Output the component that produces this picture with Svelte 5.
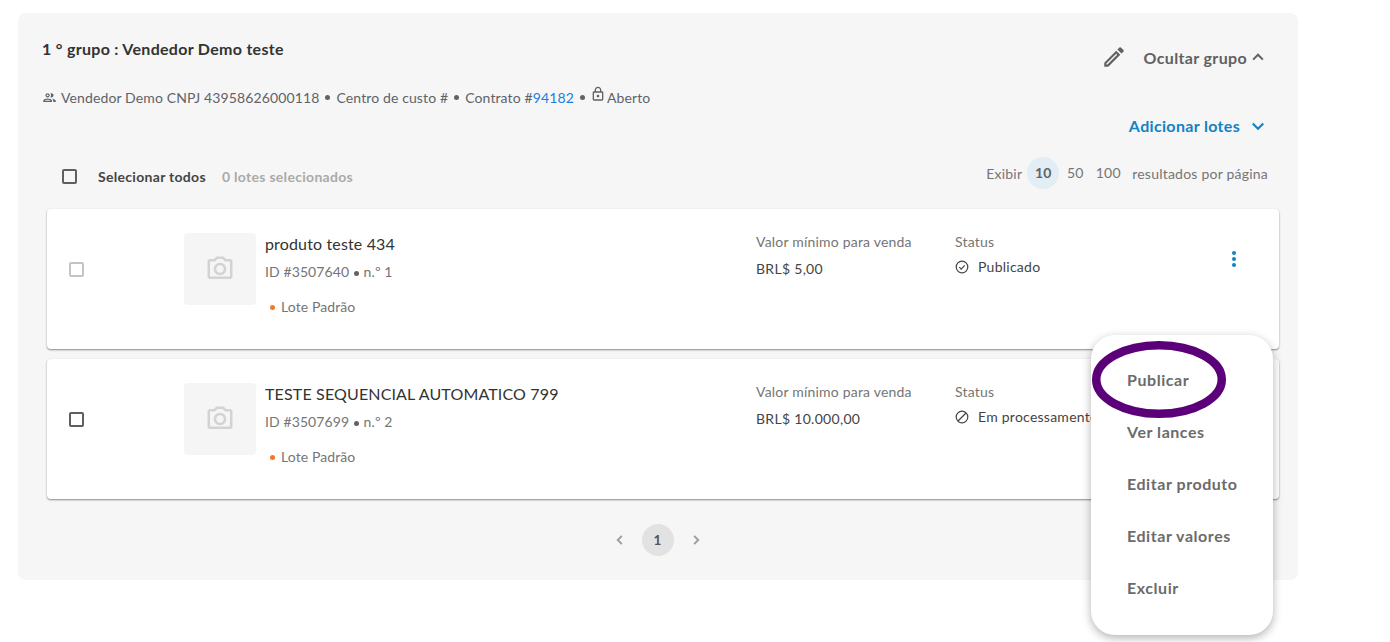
<script>
	const lots = [
		{ name: 'produto teste 434', id: '3507640', n: 1, price: 'BRL$ 5,00', status: 'Publicado', icon: 'check', faded: true },
		{ name: 'TESTE SEQUENCIAL AUTOMATICO 799', id: '3507699', n: 2, price: 'BRL$ 10.000,00', status: 'Em processamento', icon: 'block', faded: false }
	];
	const actions = ['Publicar', 'Ver lances', 'Editar produto', 'Editar valores', 'Excluir'];
</script>

<div class="page">
	<section class="group">
		<div class="head">
			<div class="info">
				<h2>1 ° grupo : Vendedor Demo teste</h2>
				<p class="meta">
					<svg class="people" viewBox="0 0 24 24" width="15" height="15"><path fill="#5f6368" d="M9 13.75c-2.34 0-7 1.17-7 3.5V19h14v-1.75c0-2.33-4.66-3.5-7-3.5zM4.34 17c.84-.58 2.87-1.25 4.66-1.25s3.82.67 4.66 1.25H4.34zM9 12c1.93 0 3.5-1.57 3.5-3.5S10.93 5 9 5 5.500 6.570 5.500 8.500 7.070 12 9 12zm0-5c.83 0 1.500.67 1.500 1.500S9.830 10 9 10s-1.500-.67-1.500-1.500S8.170 7 9 7zm7.040 6.810c1.160.84 1.960 1.960 1.960 3.440V19h4v-1.750c0-2.020-3.500-3.170-5.960-3.440zM15 12c1.930 0 3.500-1.570 3.500-3.500S16.930 5 15 5c-.54 0-1.040.13-1.500.35.630.89 1 1.980 1 3.150s-.37 2.260-1 3.150c.46.220.96.350 1.500.350z"/></svg>
					<span>Vendedor Demo CNPJ 43958626000118</span>
					<i class="dot"></i>
					<span>Centro de custo #</span>
					<i class="dot"></i>
					<span>Contrato #<span class="link">94182</span></span>
					<i class="dot tight"></i>
					<svg class="lock" viewBox="0 0 24 24" width="16" height="16"><path fill="#5f6368" d="M18 8h-1V6c0-2.760-2.240-5-5-5S7 3.240 7 6v2H6c-1.100 0-2 .9-2 2v10c0 1.100.9 2 2 2h12c1.100 0 2-.9 2-2V10c0-1.100-.9-2-2-2zM9 6c0-1.660 1.340-3 3-3s3 1.340 3 3v2H9V6zm9 14H6V10h12v10zm-6-3c1.100 0 2-.9 2-2s-.9-2-2-2-2 .9-2 2 .9 2 2 2z"/></svg>
					<span>Aberto</span>
				</p>
			</div>
			<div class="head-actions">
				<svg class="pencil" viewBox="0 0 24 24" width="26" height="26"><path fill="#616161" d="M3 17.250V21h3.750L17.810 9.940l-3.750-3.750L3 17.250zM5.920 19H5v-.92l9.060-9.060.92.92L5.920 19zM20.710 7.040a1 1 0 0 0 0-1.410l-2.340-2.340a1 1 0 0 0-1.410 0l-1.830 1.830 3.750 3.750 1.830-1.830z"/></svg>
				<button class="toggle">Ocultar grupo
					<svg viewBox="0 0 24 24" width="18" height="18"><path fill="none" stroke="#616161" stroke-width="2.600" d="M5.500 15.500 12 9l6.500 6.500"/></svg>
				</button>
			</div>
		</div>

		<div class="add-row">
			<button class="add">Adicionar lotes
				<svg viewBox="0 0 24 24" width="18" height="18"><path fill="none" stroke="#1282c4" stroke-width="2.800" d="M5 10 12 17 19 10"/></svg>
			</button>
		</div>

		<div class="toolbar">
			<div class="select-all">
				<span class="box dark"></span>
				<strong>Selecionar todos</strong>
				<span class="count">0 lotes selecionados</span>
			</div>
			<div class="per-page">
				<span>Exibir</span>
				<span class="size active">10</span>
				<span class="size">50</span>
				<span class="size wide">100</span>
				<span class="suffix">resultados por página</span>
			</div>
		</div>

		<div class="lots">
			{#each lots as lot}
				<article class="card">
					<span class="box" class:dark={!lot.faded}></span>
					<div class="thumb">
						<svg viewBox="0 0 24 24" width="30" height="30"><path fill="#d3d3d3" d="M14.120 4l1.830 2H20v12H4V6h4.050l1.830-2h4.240M15 2H9L7.170 4H4c-1.100 0-2 .9-2 2v12c0 1.100.9 2 2 2h16c1.100 0 2-.9 2-2V6c0-1.100-.9-2-2-2h-3.170L15 2zm-3 7c1.650 0 3 1.350 3 3s-1.350 3-3 3-3-1.350-3-3 1.350-3 3-3m0-2c-2.760 0-5 2.240-5 5s2.240 5 5 5 5-2.240 5-5-2.240-5-5-5z"/></svg>
					</div>
					<div class="desc">
						<h3>{lot.name}</h3>
						<p class="lot-id">ID #{lot.id} <i class="dot small"></i> n.º {lot.n}</p>
						<p class="tag"><i class="orange"></i>Lote Padrão</p>
					</div>
					<div class="price">
						<span class="label">Valor mínimo para venda</span>
						<span class="value">{lot.price}</span>
					</div>
					<div class="status">
						<span class="label">Status</span>
						<span class="state">
							{#if lot.icon === 'check'}
								<svg viewBox="0 0 16 16" width="16" height="16"><circle cx="8" cy="8" r="5.800" fill="none" stroke="#444" stroke-width="1.200"/><path fill="none" stroke="#444" stroke-width="1.200" d="M5.300 8.200l1.900 1.900 3.500-3.700"/></svg>
							{:else}
								<svg viewBox="0 0 16 16" width="16" height="16"><circle cx="8" cy="8" r="5.800" fill="none" stroke="#444" stroke-width="1.200"/><path fill="none" stroke="#444" stroke-width="1.200" d="M4 12 12 4"/></svg>
							{/if}
							{lot.status}
						</span>
					</div>
					{#if lot.faded}
						<button class="more" aria-label="Mais opções"><i></i><i></i><i></i></button>
					{/if}
				</article>
			{/each}
		</div>

		<nav class="pager">
			<svg viewBox="0 0 24 24" width="18" height="18"><path fill="none" stroke="#9e9e9e" stroke-width="2.600" d="M14.500 6.500 9 12l5.500 5.500"/></svg>
			<span class="current">1</span>
			<svg viewBox="0 0 24 24" width="18" height="18"><path fill="none" stroke="#9e9e9e" stroke-width="2.600" d="M9.500 6.500 15 12l-5.500 5.500"/></svg>
		</nav>
	</section>

	<ul class="menu">
		{#each actions as action}
			<li>{action}</li>
		{/each}
	</ul>
	<svg class="circle" viewBox="0 0 136 80" width="136" height="80"><ellipse cx="68" cy="39.500" rx="62.750" ry="34.250" fill="none" stroke="#5c0079" stroke-width="8.500"/></svg>
</div>

<style>
	:global(body) {
		margin: 0;
		background: #fff;
	}
	.page {
		position: relative;
		height: 642px;
		overflow: hidden;
		padding: 13px 92px 0 18px;
		box-sizing: border-box;
		font-family: Lato, "Open Sans", sans-serif;
		color: #616161;
	}
	.group {
		height: 567px;
		box-sizing: border-box;
		padding: 24px 19px 0 24px;
		background: #f6f6f6;
		border-radius: 8px;
	}
	.head {
		display: flex;
		justify-content: space-between;
	}
	h2 {
		margin: 0;
		font-size: 16px;
		line-height: 24px;
		font-weight: 700;
		letter-spacing: 0.3px;
		color: #333;
	}
	.meta {
		display: flex;
		align-items: center;
		margin: 26px 0 0;
		height: 20px;
		font-size: 14px;
		letter-spacing: 0.12px;
		color: #5f6368;
	}
	.people {
		margin-right: 4px;
	}
	.lock {
		margin: -6px 1px 0 0;
	}
	.link {
		color: #1a7fe0;
	}
	.dot {
		width: 5px;
		height: 5px;
		margin: 1px 6px 0;
		border-radius: 50%;
		background: #5f6368;
	}
	.dot.tight {
		margin-right: 5px;
	}
	.dot.small {
		display: inline-block;
		margin: 0 1px 1px;
	}
	.head-actions {
		display: flex;
		align-items: center;
		height: 28px;
		margin-top: 6px;
		padding-right: 12px;
	}
	button {
		border: 0;
		padding: 0;
		background: none;
		font-family: inherit;
	}
	.toggle {
		display: flex;
		align-items: center;
		gap: 2px;
		margin-left: 17px;
		font-size: 16px;
		font-weight: 700;
		letter-spacing: 0.35px;
		color: #616161;
	}
	.add-row {
		display: flex;
		justify-content: flex-end;
		margin-top: 6px;
		padding-right: 12px;
	}
	.add {
		display: flex;
		align-items: center;
		gap: 9px;
		height: 24px;
		font-size: 16px;
		font-weight: 700;
		letter-spacing: 0.33px;
		color: #1282c4;
	}
	.toolbar {
		display: flex;
		justify-content: space-between;
		align-items: center;
		height: 32px;
		margin-top: 20px;
		padding: 0 11px 0 20px;
	}
	.select-all {
		display: flex;
		align-items: center;
		font-size: 14px;
		letter-spacing: 0.3px;
		margin-top: 7px;
	}
	.select-all strong {
		margin-left: 21px;
		color: #444;
	}
	.count {
		margin-left: 16px;
		font-weight: 700;
		color: #aaa;
	}
	.box {
		flex: none;
		width: 11px;
		height: 11px;
		border: 2px solid #c4c4c4;
		border-radius: 2px;
	}
	.box.dark {
		border-color: #5f5f5f;
	}
	.per-page {
		display: flex;
		align-items: center;
		font-size: 14px;
		letter-spacing: 0.22px;
		color: #757575;
	}
	.size {
		width: 32px;
		height: 32px;
		line-height: 32px;
		text-align: center;
		border-radius: 50%;
	}
	.size.wide {
		width: 34px;
	}
	.size.active {
		margin-left: 5px;
		background: #e2edf4;
		font-weight: 700;
		color: #5f6368;
	}
	.suffix {
		margin-left: 7px;
	}
	.lots {
		display: flex;
		flex-direction: column;
		gap: 10px;
		margin: 20px 0 0 5px;
	}
	.card {
		position: relative;
		display: flex;
		height: 140px;
		box-sizing: border-box;
		padding: 24px 0 0 22px;
		background: #fff;
		border-radius: 4px;
		box-shadow: 0 1px 2px rgba(0, 0, 0, 0.45);
	}
	.card > .box {
		margin: 29px 100px 0 0;
	}
	.thumb {
		display: flex;
		flex: none;
		align-items: center;
		justify-content: center;
		width: 72px;
		height: 72px;
		border-radius: 4px;
		background: #f5f5f5;
	}
	.desc {
		width: 491px;
		margin-left: 9px;
	}
	h3 {
		margin: 0;
		font-size: 16px;
		line-height: 22px;
		font-weight: 400;
		letter-spacing: 0.15px;
		color: #333;
	}
	.lot-id {
		margin: 7px 0 0;
		font-size: 14px;
		line-height: 20px;
		letter-spacing: 0.1px;
		color: #757575;
	}
	.tag {
		display: flex;
		align-items: center;
		margin: 15px 0 0 5px;
		font-size: 14px;
		line-height: 20px;
		letter-spacing: 0.1px;
		color: #757575;
	}
	.orange {
		width: 5px;
		height: 5px;
		margin-right: 6px;
		border-radius: 50%;
		background: #f5782a;
	}
	.price,
	.status {
		display: flex;
		flex-direction: column;
		align-items: flex-start;
	}
	.price {
		width: 199px;
	}
	.label {
		font-size: 14px;
		line-height: 18px;
		letter-spacing: 0.2px;
		color: #757575;
	}
	.value {
		margin-top: 8px;
		font-size: 14px;
		line-height: 20px;
		letter-spacing: 0.3px;
		color: #444;
	}
	.state {
		display: flex;
		align-items: center;
		gap: 8px;
		margin-top: 6px;
		font-size: 14px;
		line-height: 20px;
		letter-spacing: 0.25px;
		color: #444;
		white-space: nowrap;
	}
	.state svg {
		margin-left: -1px;
	}
	.more {
		position: absolute;
		top: 42px;
		right: 43px;
		display: flex;
		flex-direction: column;
		gap: 2px;
	}
	.more i {
		width: 4px;
		height: 4px;
		border-radius: 50%;
		background: #1282c4;
	}
	.pager {
		display: flex;
		justify-content: center;
		align-items: center;
		gap: 13px;
		margin-top: 25px;
		padding-right: 6px;
	}
	.current {
		width: 32px;
		height: 32px;
		line-height: 32px;
		text-align: center;
		border-radius: 50%;
		background: #e2e2e2;
		font-size: 13.600px;
		font-weight: 700;
		color: #555;
	}
	.menu {
		position: absolute;
		top: 335px;
		left: 1091px;
		width: 182px;
		height: 300px;
		box-sizing: border-box;
		margin: 0;
		padding: 19px 0 0 36px;
		list-style: none;
		background: #fff;
		border-radius: 24px;
		box-shadow: 0 3px 10px rgba(0, 0, 0, 0.3);
	}
	.menu li {
		height: 52px;
		line-height: 52px;
		font-size: 16px;
		font-weight: 700;
		letter-spacing: 0.55px;
		color: #6b6b6b;
	}
	.circle {
		position: absolute;
		top: 340px;
		left: 1091px;
	}
</style>
